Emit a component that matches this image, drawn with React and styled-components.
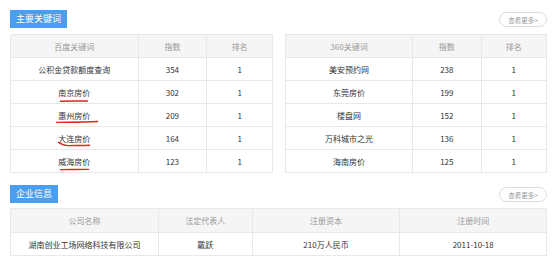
import React from 'react'
import styled, { createGlobalStyle } from 'styled-components'

const GlobalStyle = createGlobalStyle`
  html, body {
    margin: 0;
    padding: 0;
    background: #fff;
  }
  body {
    font-family: "Noto Sans CJK SC", "Noto Sans", sans-serif;
    color: #333;
  }
`

const Page = styled.div`
  width: 537px;
  padding: 10px 7px 0 10px;
`

const Section = styled.section`
  margin-bottom: ${props => props.gap || 0}px;
`

const SectionHead = styled.div`
  display: flex;
  justify-content: space-between;
  align-items: flex-end;
  height: 18px;
  margin-bottom: ${props => props.spacing || 6}px;
`

const Badge = styled.h2`
  margin: 0;
  height: 18px;
  padding: 0 6px;
  background: #4a9ef0;
  color: #fff;
  font-size: 9px;
  font-weight: 400;
  line-height: 18px;
`

const MoreButton = styled.a`
  display: inline-flex;
  align-items: center;
  justify-content: center;
  box-sizing: border-box;
  width: 48px;
  height: 15px;
  margin-bottom: 1px;
  border: 1px solid #dcdcdc;
  border-radius: 8px;
  color: #999;
  font-size: 6.5px;
  cursor: pointer;
`

const Pair = styled.div`
  display: grid;
  grid-template-columns: 263px 262px;
  column-gap: 12px;
`

const Table = styled.table`
  width: 100%;
  border-collapse: collapse;
  table-layout: fixed;
  font-size: 8px;
  color: #333;
`

const Th = styled.th`
  width: ${props => props.w};
  height: ${props => props.h || 22}px;
  padding: 0;
  background: #f5f5f5;
  border: 1px solid #e8e8e8;
  color: #999;
  font-weight: 400;
  text-align: center;
`

const Td = styled.td`
  height: 22px;
  padding: 0;
  border: 1px solid #e8e8e8;
  text-align: center;
  white-space: nowrap;
`

const Marked = styled.span`
  position: relative;
  display: inline-block;
  line-height: 10px;
`

const Scribble = styled.svg`
  position: absolute;
  top: 100%;
  left: -4px;
  overflow: visible;
  pointer-events: none;
`

const marks = {
  nj: 'M6.5 3.2 C 14 2.8, 24 3, 33.5 3',
  hz: 'M2.5 1.4 C 14 1.2, 30 1.2, 43.5 0.5',
  dl: 'M4.5 -1.6 C 7 0, 10 1.6, 13.5 1.6 C 20 1.4, 28 1.6, 35.5 1.3',
  wh: 'M6.5 2.6 C 14 2.4, 24 2.6, 34.5 2.4',
}

function Underlined({ children, mark }) {
  return (
    <Marked>
      {children}
      <Scribble width="46" height="6">
        <path d={marks[mark]} fill="none" stroke="#e0261f" strokeWidth="1.4" strokeLinecap="round" />
      </Scribble>
    </Marked>
  )
}

const baidu = [
  { word: '公积金贷款额度查询', index: 354, rank: 1 },
  { word: '南京房价', index: 302, rank: 1, mark: 'nj' },
  { word: '惠州房价', index: 209, rank: 1, mark: 'hz' },
  { word: '大连房价', index: 164, rank: 1, mark: 'dl' },
  { word: '威海房价', index: 123, rank: 1, mark: 'wh' },
]

const so360 = [
  { word: '美安预约网', index: 238, rank: 1 },
  { word: '东莞房价', index: 199, rank: 1 },
  { word: '楼盘网', index: 152, rank: 1 },
  { word: '万科城市之光', index: 136, rank: 1 },
  { word: '海南房价', index: 125, rank: 1 },
]

function KeywordTable({ title, rows }) {
  return (
    <Table>
      <thead>
        <tr>
          <Th w="48.3%">{title}</Th>
          <Th w="25.85%">指数</Th>
          <Th>排名</Th>
        </tr>
      </thead>
      <tbody>
        {rows.map(r => (
          <tr key={r.word}>
            <Td>{r.mark ? <Underlined mark={r.mark}>{r.word}</Underlined> : r.word}</Td>
            <Td>{r.index}</Td>
            <Td>{r.rank}</Td>
          </tr>
        ))}
      </tbody>
    </Table>
  )
}

export default function App() {
  return (
    <Page>
      <GlobalStyle />
      <Section gap={12}>
        <SectionHead>
          <Badge>主要关键词</Badge>
          <MoreButton>查看更多&gt;</MoreButton>
        </SectionHead>
        <Pair>
          <KeywordTable title="百度关键词" rows={baidu} />
          <KeywordTable title="360关键词" rows={so360} />
        </Pair>
      </Section>
      <Section>
        <SectionHead spacing={5}>
          <Badge>企业信息</Badge>
          <MoreButton>查看更多&gt;</MoreButton>
        </SectionHead>
        <Table>
          <thead>
            <tr>
              <Th w="27.4%" h={23}>公司名称</Th>
              <Th w="17.3%" h={23}>法定代表人</Th>
              <Th w="27.4%" h={23}>注册资本</Th>
              <Th h={23}>注册时间</Th>
            </tr>
          </thead>
          <tbody>
            <tr>
              <Td>湖南创业工场网络科技有限公司</Td>
              <Td>戴跃</Td>
              <Td>210万人民币</Td>
              <Td>2011-10-18</Td>
            </tr>
          </tbody>
        </Table>
      </Section>
    </Page>
  )
}
